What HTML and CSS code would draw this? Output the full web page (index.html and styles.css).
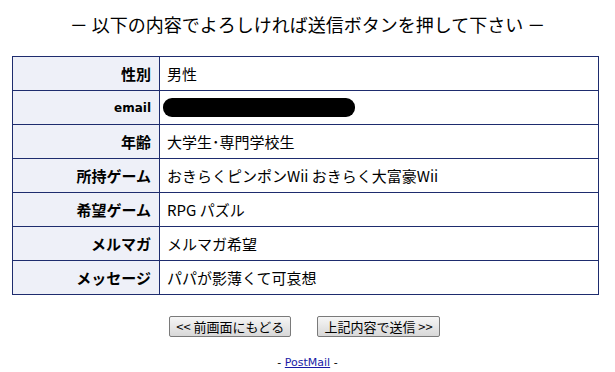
FILE: index.html
```html
<!DOCTYPE html>
<html lang="ja">
  <head>
    <meta charset="UTF-8" />
    <title>確認画面</title>
    <link rel="stylesheet" href="styles.css">
  </head>
  <body>
    <p class="lead">－ 以下の内容でよろしければ送信ボタンを押して下さい －</p>
    <form class="confirm">
      <table class="form-table">
        <tr>
          <th>性別</th>
          <td>男性</td>
        </tr>
        <tr>
          <th class="small">email</th>
          <td><span class="masked"></span></td>
        </tr>
        <tr>
          <th>年齢</th>
          <td>大学生･専門学校生</td>
        </tr>
        <tr>
          <th>所持ゲーム</th>
          <td>おきらくピンポンWii おきらく大富豪Wii</td>
        </tr>
        <tr>
          <th>希望ゲーム</th>
          <td>RPG パズル</td>
        </tr>
        <tr>
          <th>メルマガ</th>
          <td>メルマガ希望</td>
        </tr>
        <tr>
          <th>メッセージ</th>
          <td>パパが影薄くて可哀想</td>
        </tr>
      </table>
      <div class="buttons">
        <button type="button" class="btn">&lt;&lt; 前画面にもどる</button>
        <button type="button" class="btn">上記内容で送信 &gt;&gt;</button>
      </div>
    </form>
    <p class="footer">- <a href="#">PostMail</a> -</p>
  </body>
</html>
```
FILE: styles.css
```css
html {
  font-family: "Noto Sans CJK JP", "Noto Sans", sans-serif;
  font-size: 14px;
}

body {
  margin: 0;
  background: #fff;
  color: #000;
}

.lead {
  margin: 0;
  padding-top: 12px;
  height: 56px;
  box-sizing: border-box;
  text-align: center;
  font-size: 18px;
  line-height: 24px;
}

.form-table {
  margin-left: 12px;
  width: 587px;
  border-collapse: collapse;
}

.form-table th,
.form-table td {
  height: 33px;
  padding: 0;
  border: 1px solid #1e2c6e;
  font-size: 15px;
  line-height: 18px;
}

.form-table th {
  width: 138px;
  padding-right: 8px;
  text-align: right;
  background: #eef0f8;
}

.form-table th.small {
  font-family: "DejaVu Sans", sans-serif;
  font-size: 12px;
}

.form-table td {
  padding-left: 7px;
  font-weight: normal;
}

.masked {
  display: block;
  width: 192px;
  height: 19px;
  margin-left: -4px;
  border-radius: 9px;
  background: #000;
}

.buttons {
  display: flex;
  justify-content: center;
  gap: 26px;
  margin-top: 21px;
  padding-right: 6px;
}

.btn {
  height: 21px;
  padding: 0 6px;
  font-family: inherit;
  font-size: 13px;
  line-height: 17px;
  color: #000;
  border: 1px solid #7a7a7a;
  border-radius: 2px;
  background: linear-gradient(#f6f6f6, #d8d8d8);
}

.footer {
  margin: 19px 0 0;
  text-align: center;
  font-family: "DejaVu Sans", sans-serif;
  font-size: 11px;
  line-height: 14px;
}

.footer a {
  color: #1a1aa6;
}
```
